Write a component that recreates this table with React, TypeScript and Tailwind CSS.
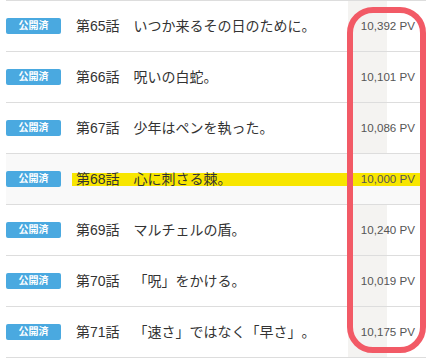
import React from "react";

const rows = [
  { no: "第65話", title: "いつか来るその日のために。", pv: "10,392 PV" },
  { no: "第66話", title: "呪いの白蛇。", pv: "10,101 PV" },
  { no: "第67話", title: "少年はペンを執った。", pv: "10,086 PV" },
  { no: "第68話", title: "心に刺さる棘。", pv: "10,000 PV", hl: true },
  { no: "第69話", title: "マルチェルの盾。", pv: "10,240 PV" },
  { no: "第70話", title: "「呪」をかける。", pv: "10,019 PV" },
  { no: "第71話", title: "「速さ」ではなく「早さ」。", pv: "10,175 PV" },
];

export default function App() {
  return (
    <div
      className="relative w-[426px] h-[358px] bg-white overflow-hidden [text-spacing-trim:space-all]"
      style={{ fontFamily: '"Liberation Sans", "Noto Sans CJK JP", sans-serif' }}
    >
      <div className="absolute left-[348px] top-0 w-[39px] h-[358px] bg-[#f4f3f1]" />
      <div className="relative ml-[6px] border-b border-[#dddddd]">
        {rows.map((r, i) => (
          <div
            key={i}
            className={`flex items-center h-[51px] border-t border-[#dddddd] ${r.hl ? "bg-[#f9f9f9]" : ""}`}
          >
            <div className="w-[55px] h-[16px] rounded-[2px] bg-[#4aa9e0] text-white text-[10px] font-bold flex items-center justify-center leading-none">
              公開済
            </div>
            <div
              className={`ml-[11px] mr-[6px] flex-1 flex items-center h-[13px] pl-[4px] pr-[5px] ${r.hl ? "bg-[#f8e600]" : ""}`}
            >
              <span className="text-[14px] text-[#333333] leading-none whitespace-nowrap [text-spacing-trim:space-all]">
                {r.no}　{r.title}
              </span>
              <span className="ml-auto text-[11.6px] text-[#555555] leading-none whitespace-nowrap">
                {r.pv}
              </span>
            </div>
          </div>
        ))}
      </div>
      <div className="absolute left-[347px] top-[7px] w-[79px] h-[346px] border-[6px] border-[#f25a66] rounded-[26px]" />
    </div>
  );
}
